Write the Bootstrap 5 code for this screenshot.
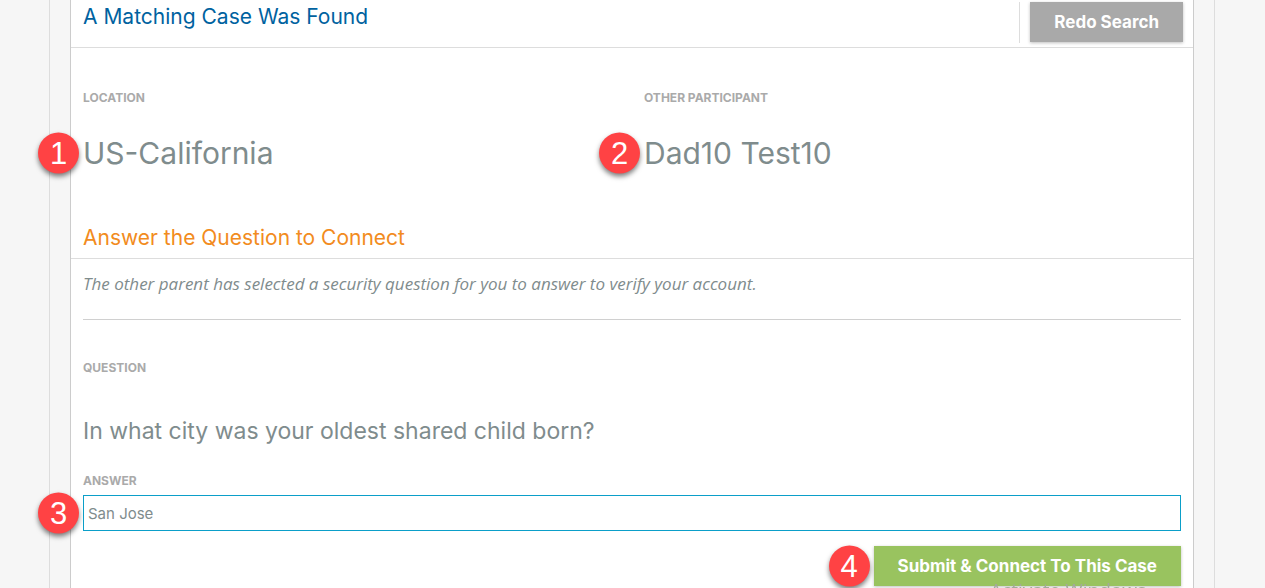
<!DOCTYPE html>
<html lang="en">
<head>
<meta charset="utf-8">
<meta name="viewport" content="width=device-width, initial-scale=1">
<title>A Matching Case Was Found</title>
<link href="https://cdn.jsdelivr.net/npm/bootstrap@5.3.0/dist/css/bootstrap.min.css" rel="stylesheet">
<style>
  body { background: #f6f6f6; color: #7f8c8d; font-family: Inter, "Liberation Sans", sans-serif; }
  .page-frame { margin: 0 50px 0 49px; padding: 0 20px; border: solid #ddd; border-width: 0 1px; }
  .case-panel { background: #fff; border: solid #ccc; border-width: 0 1px; }
  .rule-below { border-bottom: 1px solid #ddd; }
  .section-title { font-size: 21px; line-height: 28px; font-weight: 400; margin: 0; }
  .title-found { color: #00629f; padding-top: 3px; }
  .title-answer { color: #f28b20; padding: 0 12px 6px; }
  .redo-wrap { border-left: 1px solid #ddd; padding: 0 10px 1px; margin: 2px 0 4px; }
  .action { height: 40px; border: 0; border-radius: 0; padding: 0 24px; color: #fff; font-weight: 700; font-size: 17px; line-height: 24px; box-shadow: 0 1px 3px rgba(0,0,0,.25); }
  .action-redo { background: #a9a9a9; }
  .action-submit { background: #99c35f; }
  .field-label { display: block; color: #aaa; font-weight: 700; font-size: 12px; line-height: 16px; margin: 0; text-transform: uppercase; }
  .field-value { font-size: 30px; line-height: 40px; margin: 27px 0 51px; }
  .details { padding-top: 42px; margin: 0; }
  .hint { font: italic 400 17px/24px "Open Sans", sans-serif; margin: 0 12px; padding: 13px 0 23px; border-bottom: 1px solid #d0d0d0; }
  .question-text { font-size: 23px; line-height: 32px; margin: 39px 0 26px; }
  .form-control.answer-box { height: 36px; border: 1px solid #0b9fc9; border-radius: 0; padding: 0 4px; color: #7f8c8d; font-size: 15px; line-height: 24px; margin-top: 6px; }
  .submit-row { padding-top: 15px; }
  .marker { position: absolute; width: 41px; height: 41px; border-radius: 50%; background: #ff4244; color: #fff; font: 400 31px/41px "Liberation Sans", sans-serif; text-align: center; box-shadow: 0 3px 5px rgba(0,0,0,.5); right: 100%; top: 50%; transform: translateY(-50%); margin-right: 4px; }
  .os-notice { position: fixed; z-index: 10; right: 119px; bottom: 0; height: 8px; overflow: hidden; color: #a3a99b; font: 400 19px/20px "Open Sans", sans-serif; pointer-events: none; }
</style>
</head>
<body>
<div class="page-frame min-vh-100">
  <main class="case-panel min-vh-100">
    <header class="d-flex justify-content-between rule-below">
      <h1 class="section-title title-found px-2 ms-1">A Matching Case Was Found</h1>
      <div class="redo-wrap"><button type="button" class="btn action action-redo">Redo Search</button></div>
    </header>
    <section class="row details">
      <div class="col-6">
        <h2 class="field-label">Location</h2>
        <p class="field-value position-relative">US-California<span class="marker">1</span></p>
      </div>
      <div class="col-6">
        <h2 class="field-label">Other Participant</h2>
        <p class="field-value position-relative">Dad10 Test10<span class="marker">2</span></p>
      </div>
    </section>
    <h2 class="section-title title-answer rule-below">Answer the Question to Connect</h2>
    <p class="hint">The other parent has selected a security question for you to answer to verify your account.</p>
    <form class="px-2 mx-1 pt-4">
      <div class="pt-3">
        <h3 class="field-label">Question</h3>
        <p class="question-text">In what city was your oldest shared child born?</p>
        <label class="field-label" for="answer">Answer</label>
        <div class="position-relative">
          <input type="text" class="form-control answer-box shadow-none" id="answer" value="San Jose">
          <span class="marker">3</span>
        </div>
      </div>
      <div class="d-flex justify-content-end submit-row">
        <div class="position-relative">
          <button type="submit" class="btn action action-submit">Submit &amp; Connect To This Case</button>
          <span class="marker">4</span>
        </div>
      </div>
    </form>
  </main>
</div>
<div class="os-notice">Activate Windows</div>
<script src="https://cdn.jsdelivr.net/npm/bootstrap@5.3.0/dist/js/bootstrap.bundle.min.js"></script>
</body>
</html>
